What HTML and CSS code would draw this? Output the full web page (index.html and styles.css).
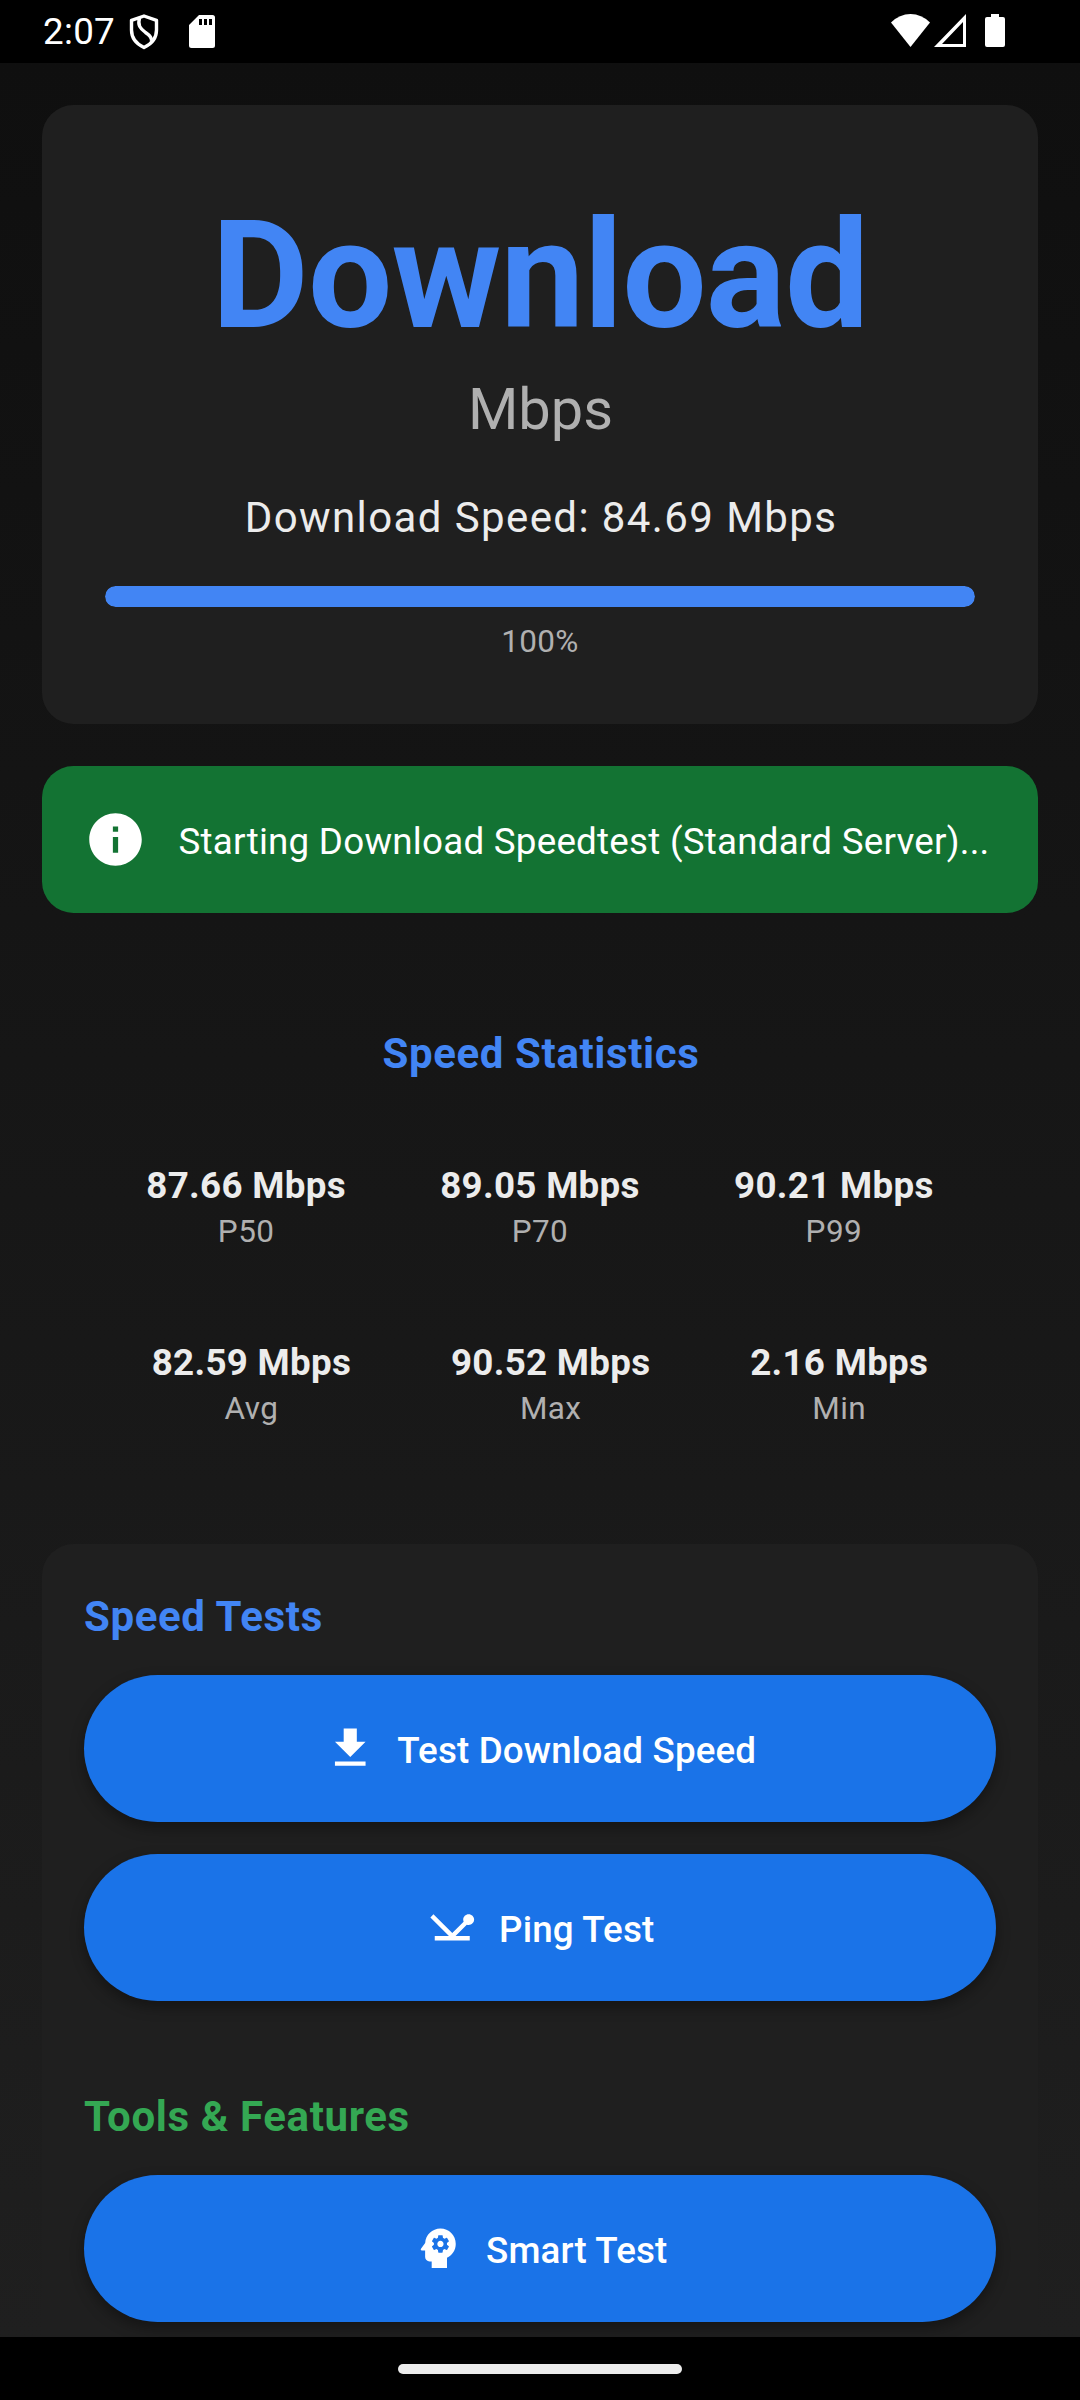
FILE: index.html
```html
<!DOCTYPE html>
<html lang="en">
<head>
<meta charset="utf-8">
<title>Speed Test</title>
<link rel="stylesheet" href="styles.css">
</head>
<body>
<header class="status-bar">
  <span class="clock">2:07</span>
  <svg class="shield" viewBox="0 0 30 36" fill="none" stroke="#fff" stroke-width="3.4" stroke-linejoin="round"><path d="M15 2 L27.5 6.300V16C27.500 24 22.500 30 15 33.500C7.500 30 2.500 24 2.500 16V6.300Z"/><path d="M10.500 4C8.500 11 11 14.500 16.500 18.500C21 21.500 23 23.500 22.500 27"/></svg>
  <svg class="sd" viewBox="0 0 26 33"><path fill="#fff" fill-rule="evenodd" d="M10 0H23.500Q26 0 26 2.500V30.500Q26 33 23.500 33H2.500Q0 33 0 30.500V10ZM10 4V10H13V4ZM15 4V10H18V4ZM20 4V10H23V4Z"/></svg>
  <span class="spacer"></span>
  <svg class="wifi" viewBox="0 0 39 33"><path fill="#fff" d="M0 8.500Q8.500 0 19.500 0T39 8.500L19.500 33Z"/></svg>
  <svg class="signal" viewBox="0 0 32 33"><path fill="#fff" fill-rule="evenodd" d="M32 0V33H0ZM29 8V30H8Z"/></svg>
  <svg class="battery" viewBox="0 0 20 33"><path fill="#fff" d="M6 0H14V3H18Q20 3 20 5V31Q20 33 18 33H2Q0 33 0 31V5Q0 3 2 3H6Z"/></svg>
</header>
<main class="screen">
  <section class="card result">
    <h1 class="phase">Download</h1>
    <div class="unit">Mbps</div>
    <div class="speed">Download Speed: 84.69 Mbps</div>
    <div class="progress"><div class="progress-fill" style="width:100%"></div></div>
    <div class="percent">100%</div>
  </section>
  <section class="notice">
    <svg class="info" viewBox="0 0 24 24"><path fill="#fff" d="M12 2C6.480 2 2 6.480 2 12s4.480 10 10 10 10-4.480 10-10S17.520 2 12 2zm1 15h-2v-6h2v6zm0-8h-2V7h2v2z"/></svg>
    <span class="notice-text">Starting Download Speedtest (Standard Server)...</span>
  </section>
  <section class="stats">
    <h2 class="heading">Speed Statistics</h2>
    <div class="stats-row">
      <div class="stat"><b class="value">87.66 Mbps</b><span class="label">P50</span></div>
      <div class="stat"><b class="value">89.05 Mbps</b><span class="label">P70</span></div>
      <div class="stat"><b class="value">90.21 Mbps</b><span class="label">P99</span></div>
    </div>
    <div class="stats-row">
      <div class="stat"><b class="value">82.59 Mbps</b><span class="label">Avg</span></div>
      <div class="stat"><b class="value">90.52 Mbps</b><span class="label">Max</span></div>
      <div class="stat"><b class="value">2.16 Mbps</b><span class="label">Min</span></div>
    </div>
  </section>
  <section class="card actions">
    <h2 class="heading">Speed Tests</h2>
    <button class="action"><svg class="icon" viewBox="0 0 24 24"><path fill="#fff" d="M19 9h-4V3H9v6H5l7 7 7-7zM5 18v2h14v-2H5z"/></svg><span class="action-text">Test Download Speed</span></button>
    <button class="action"><svg class="icon" viewBox="0 0 24 24"><path fill="#fff" d="M12 14.670L3.410 6.090 2 7.500 10.500 16H4v2h16v-2h-6.500l5.150-5.150c.260.100.550.150.850.150 1.380 0 2.500-1.120 2.500-2.500S20.880 6 19.500 6 17 7.120 17 8.500c0 .350.070.670.200.970L12 14.670z"/></svg><span class="action-text">Ping Test</span></button>
    <h2 class="heading tools">Tools &amp; Features</h2>
    <button class="action"><svg class="icon" viewBox="0 0 24 24"><g fill="#fff"><path d="M13 8.570c-.790 0-1.430.640-1.430 1.430s.640 1.430 1.430 1.430 1.430-.640 1.430-1.430-.640-1.430-1.430-1.430z"/><path fill-rule="evenodd" d="M13 3C9.250 3 6.200 5.940 6.020 9.640L4.100 12.200c-.250.330-.010.800.400.800H6v3c0 1.100.900 2 2 2h1v3h7v-4.680c2.360-1.120 4-3.530 4-6.320 0-3.870-3.130-7-7-7zm3 7c0 .130-.010.260-.020.390l.830.660c.080.060.100.160.050.250l-.800 1.390c-.050.090-.160.120-.240.090l-.990-.400c-.210.160-.430.290-.670.390L14 13.830c-.010.100-.100.170-.200.170h-1.600c-.100 0-.180-.070-.200-.170l-.150-1.060c-.250-.100-.470-.230-.680-.390l-.990.400c-.090.030-.200 0-.250-.090l-.800-1.390c-.050-.080-.030-.190.050-.250l.840-.660c-.010-.130-.020-.260-.020-.390s.020-.270.040-.390l-.850-.660c-.080-.060-.100-.160-.050-.260l.800-1.380c.050-.090.150-.120.240-.090l1 .400c.200-.150.430-.290.670-.390L12 6.170c.020-.100.100-.170.200-.170h1.600c.100 0 .180.070.200.170l.150 1.060c.240.100.460.230.670.390l1-.400c.090-.030.200 0 .240.090l.800 1.380c.050.090.030.200-.050.260l-.850.660c.030.120.040.250.040.390z"/></g></svg><span class="action-text">Smart Test</span></button>
  </section>
</main>
<footer class="nav-bar"><div class="handle"></div></footer>
</body>
</html>
```

FILE: styles.css
```css
* { box-sizing: border-box; margin: 0; padding: 0; }
body {
  width: 1080px; height: 2400px; overflow: hidden;
  display: flex; flex-direction: column;
  background: #000; color: #ececec;
  font-family: Roboto, sans-serif;
}
svg { display: block; flex: none; }

.status-bar { height: 63px; flex: none; display: flex; align-items: flex-start; padding: 14px 75px 0 43px; color: #fff; }
.clock { width: 86px; font-size: 36.75px; line-height: 36px; letter-spacing: .3px; }
.shield { width: 30px; height: 36px; margin-right: 30px; }
.sd { width: 26px; height: 33px; margin-top: 1px; }
.spacer { flex: 1; }
.wifi { width: 39px; height: 33px; margin-right: 4px; }
.signal { width: 32px; height: 33px; margin-right: 19px; }
.battery { width: 20px; height: 33px; }

.screen {
  flex: 1; min-height: 0; overflow: hidden;
  display: flex; flex-direction: column;
  padding: 42px 42px 0;
  background: linear-gradient(#0f0f0f, #1f1f1f);
}
.card { background: #1f1f1f; border-radius: 31.5px; flex: none; }

.result { height: 619px; padding: 87px 63px 0; text-align: center; }
.phase { font-size: 149.6px; line-height: 168px; font-weight: 700; letter-spacing: -.85px; color: #4285f4; }
.unit { margin-top: 12px; padding-left: 1px; font-size: 57.75px; line-height: 74px; color: #b0b0b0; }
.speed { margin-top: 40px; padding-left: 2px; font-size: 42px; line-height: 63px; letter-spacing: 1.4px; }
.progress { margin-top: 37px; height: 21px; border-radius: 10.5px; background: #333; overflow: hidden; }
.progress-fill { height: 100%; border-radius: 10.5px; background: #4285f4; }
.percent { margin-top: 13px; font-size: 31.5px; line-height: 43px; letter-spacing: .3px; color: #b0b0b0; }

.notice {
  flex: none; height: 147px; margin-top: 42px; padding: 0 42px;
  display: flex; align-items: center; gap: 31.5px;
  border-radius: 31.5px; background: #137333; color: #fff;
}
.info { width: 63px; height: 63px; }
.notice-text { padding-top: 3px; font-size: 36.75px; letter-spacing: .24px; white-space: nowrap; }

.heading { font-size: 42px; line-height: 63px; font-weight: 700; letter-spacing: .62px; color: #4285f4; }
.stats { flex: none; height: 631px; padding: 109px 10px 0; text-align: center; }
.stats .heading { padding-left: 2px; }
.stats-row { display: flex; justify-content: space-evenly; margin-top: 75px; }
.heading + .stats-row { margin-top: 76px; }
.stat { display: flex; flex-direction: column; align-items: center; height: 102px; }
.value { font-size: 36.75px; line-height: 50px; letter-spacing: .3px; }
.label { font-size: 31.5px; line-height: 42px; letter-spacing: .4px; color: #b0b0b0; }

.actions { height: 1000px; padding: 41px 42px 0; }
.action {
  width: 100%; height: 147px; border: 0; border-radius: 73.5px;
  display: flex; align-items: center; justify-content: center; gap: 21px;
  background: #1a73e8; color: #fff; font: 500 36.75px Roboto, sans-serif;
  letter-spacing: .15px;
  box-shadow: 0 6px 14px rgba(0, 0, 0, .35);
}
.heading + .action { margin-top: 27px; }
.action + .action { margin-top: 32px; }
.icon { width: 52.5px; height: 52.5px; }
.action-text { padding-top: 3px; }
.tools { margin-top: 84px; color: #34a853; }

.nav-bar { height: 63px; flex: none; display: flex; justify-content: center; padding-top: 27px; }
.handle { width: 284px; height: 10px; border-radius: 5px; background: #ececec; }
```
